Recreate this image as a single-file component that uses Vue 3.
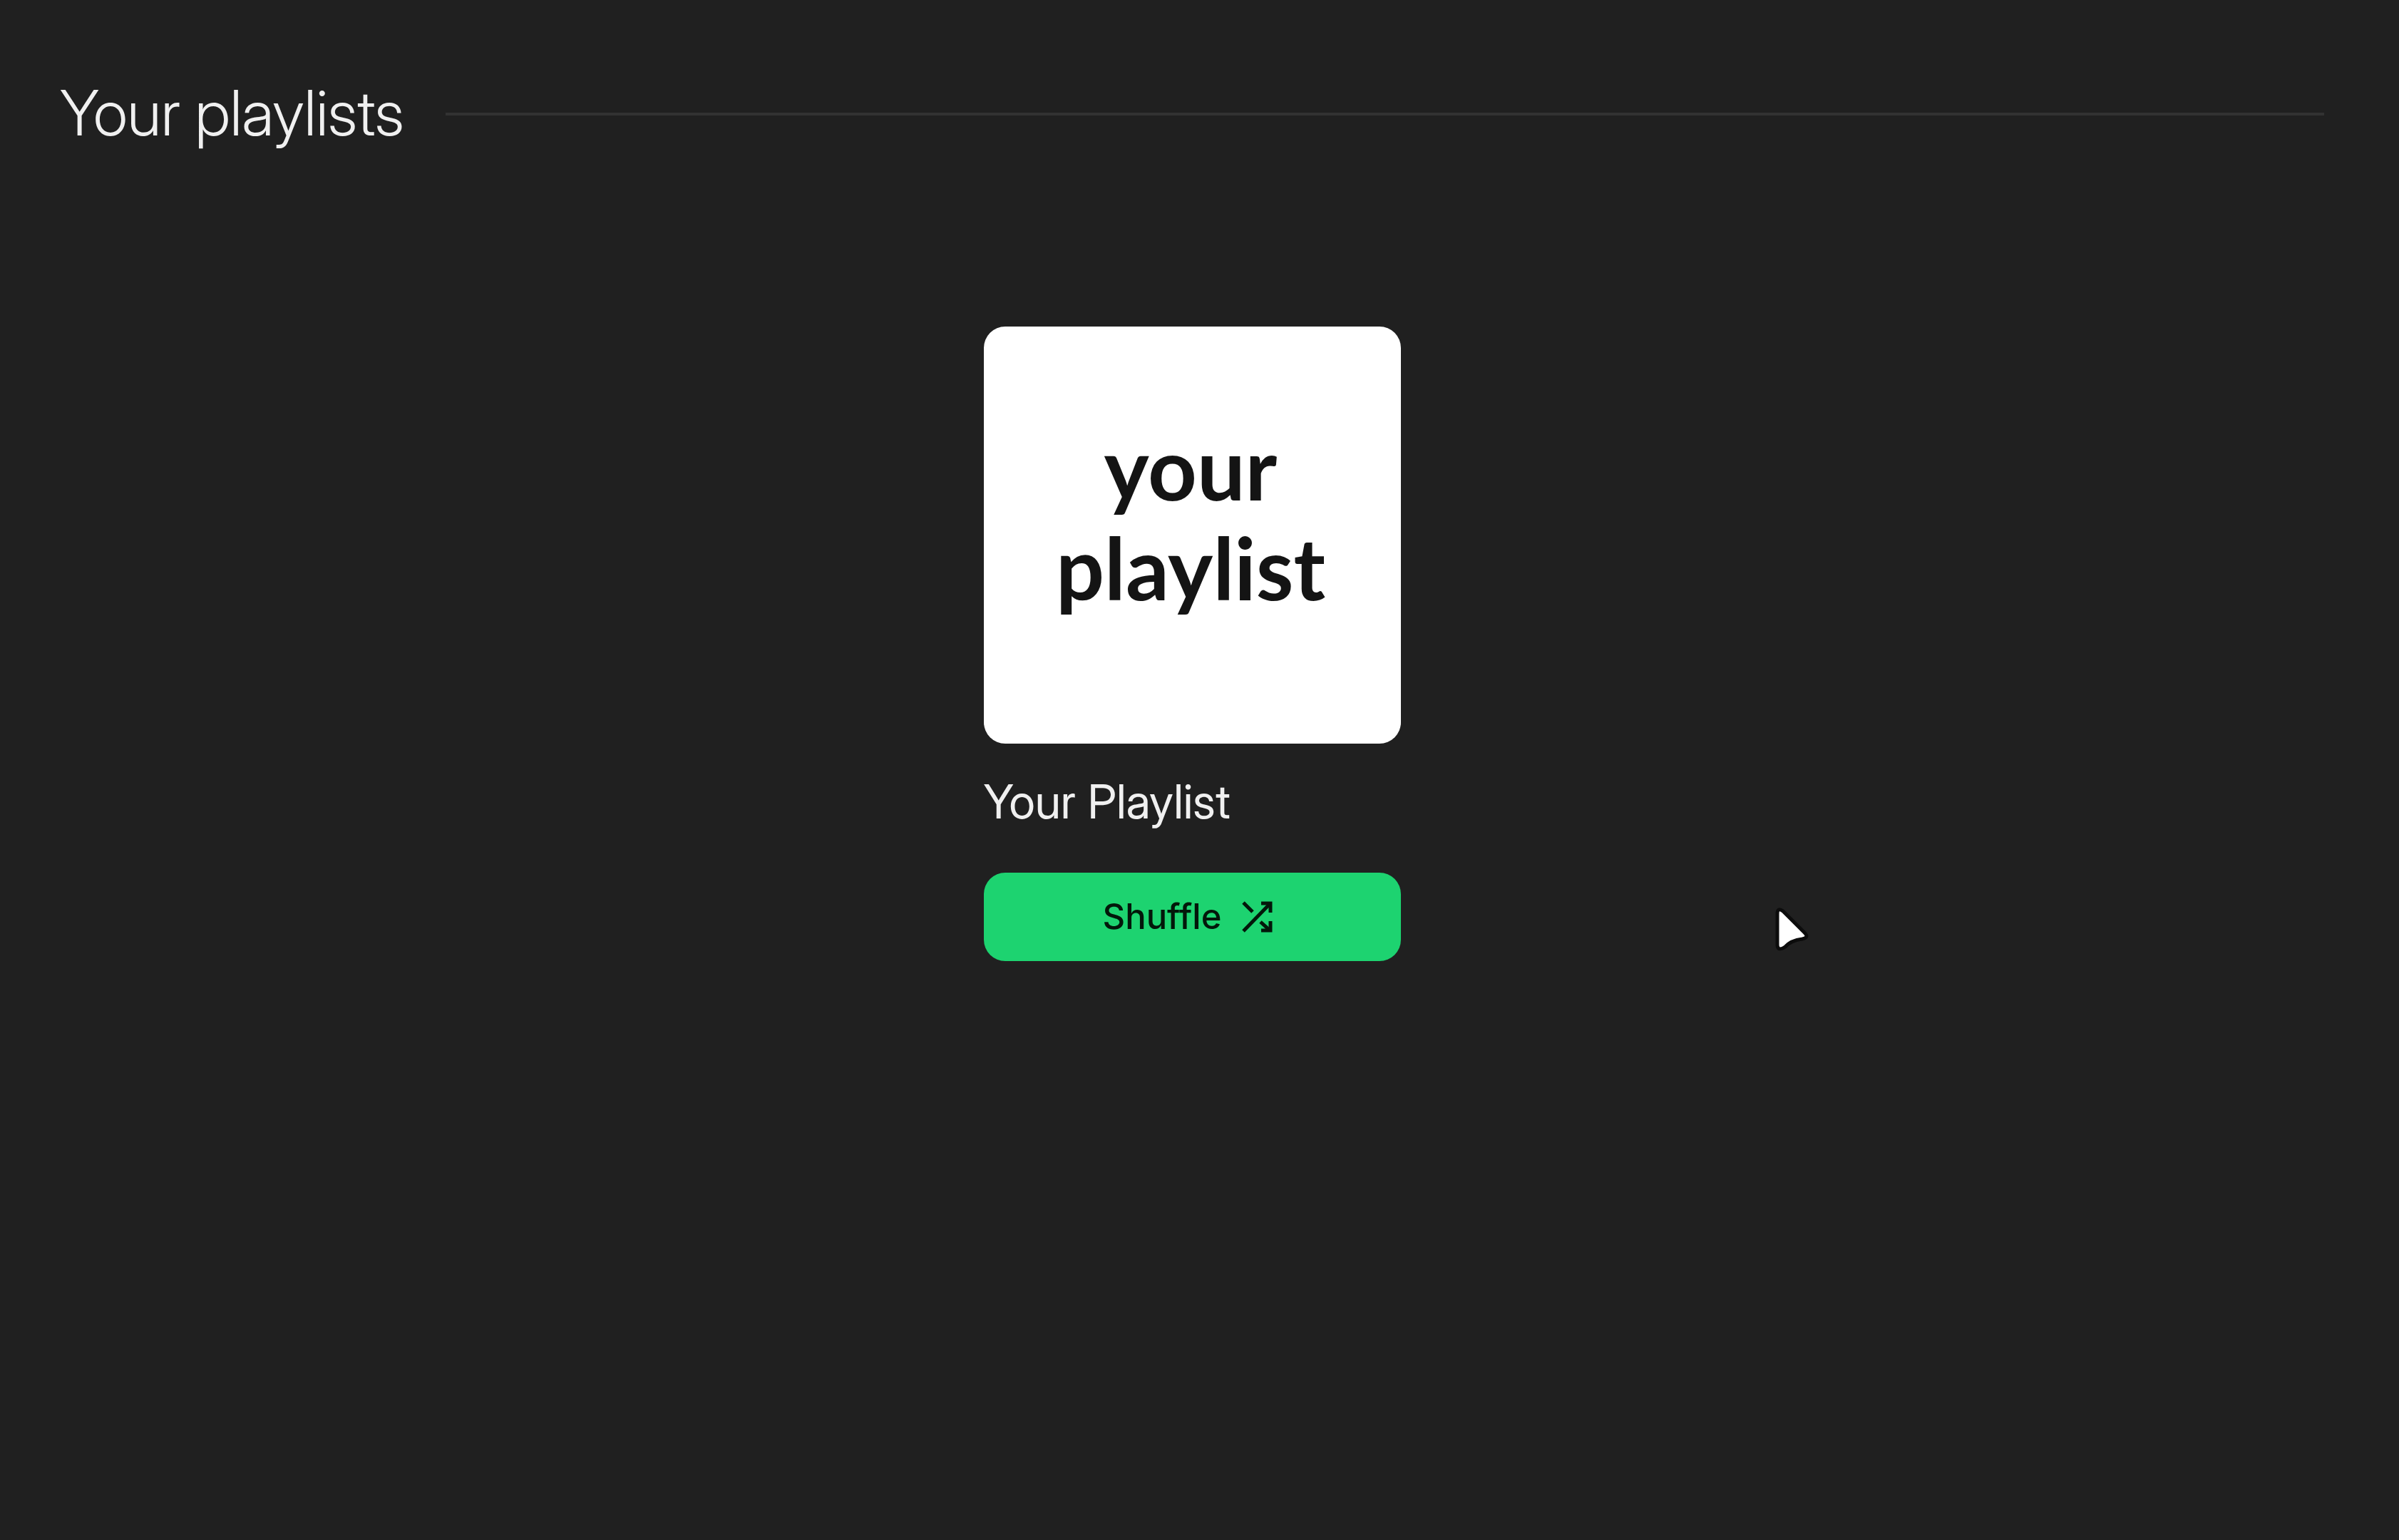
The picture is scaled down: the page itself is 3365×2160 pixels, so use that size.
<script setup>
const playlists = [{ id: 1, name: 'Your Playlist', cover: ['your', 'playlist'] }]
</script>

<template>
  <main class="page">
    <header class="heading">
      <h1>Your playlists</h1>
      <hr class="rule" />
    </header>
    <section class="list">
      <article v-for="item in playlists" :key="item.id" class="card">
        <div class="cover">
          <span v-for="line in item.cover" :key="line">{{ line }}</span>
        </div>
        <h2>{{ item.name }}</h2>
        <button type="button" class="shuffle">
          <span>Shuffle</span>
          <svg class="icon" viewBox="0 0 44 44" fill="none" stroke="currentColor" stroke-width="5" aria-hidden="true">
            <path d="M3 2 16 15M3 42 39 5M27 29 39 40" />
            <path d="M28 3H41V16M41 28V41H28" />
          </svg>
        </button>
      </article>
    </section>
    <svg class="pointer" viewBox="0 0 60 72" aria-hidden="true">
      <path d="M9 14Q9 4 17 10L47 40Q54 47 44 49Q28 51 20 60Q9 67 9 57Z" fill="#fff" stroke="#0c0c0c" stroke-width="5" stroke-linejoin="round" />
    </svg>
  </main>
</template>

<style>
body {
  margin: 0;
  background: #202020;
}
</style>

<style scoped>
.page {
  position: relative;
  box-sizing: border-box;
  min-height: 100vh;
  padding: 102px 105px 102px 84px;
  font-family: "Inter Display", Inter, sans-serif;
  color: #f0f0f0;
}
.heading {
  display: flex;
  align-items: center;
  gap: 58px;
}
h1 {
  margin: 0;
  padding-bottom: 4px;
  font-size: 88px;
  line-height: 112px;
  font-weight: 300;
}
.rule {
  flex: 1;
  height: 4px;
  margin: 0;
  border: 0;
  background: #323232;
}
.list {
  display: flex;
  justify-content: center;
  padding-top: 240px;
}
.card {
  display: flex;
  flex-direction: column;
  width: 585px;
}
.cover {
  display: flex;
  flex-direction: column;
  align-items: center;
  justify-content: center;
  box-sizing: border-box;
  height: 585px;
  padding: 0 4px 50px 0;
  border-radius: 30px;
  background: #fff;
  color: #141414;
  font: 700 120px/140px Lato, sans-serif;
}
h2 {
  margin: 41px 0 60px;
  font-size: 66px;
  line-height: 80px;
  font-weight: 400;
}
.shuffle {
  display: flex;
  align-items: center;
  justify-content: center;
  gap: 28px;
  height: 124px;
  padding: 0 12px 0 0;
  border: 0;
  border-radius: 30px;
  background: #1dd370;
  color: #03170a;
  font: 500 49px/60px Inter, sans-serif;
}
.icon {
  width: 44px;
  height: 44px;
}
.pointer {
  position: absolute;
  left: 2484px;
  top: 1268px;
  width: 60px;
  height: 72px;
}
</style>
